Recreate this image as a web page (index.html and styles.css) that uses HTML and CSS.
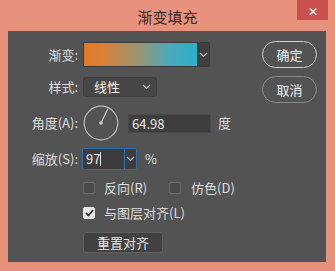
FILE: index.html
```html
<!DOCTYPE html>
<html lang="zh-CN">
<head>
    <meta charset="UTF-8">
    <title>渐变填充</title>
    <link rel="stylesheet" href="styles.css">
</head>
<body>

<div class="window">
    <div class="titlebar">
        <span class="title">渐变填充</span>
        <span class="close">✕</span>
    </div>

    <div class="panel">
        <div class="form">
            <div class="row row-gradient">
                <span class="label">渐变:</span>
                <div class="gradient-box">
                    <div class="gradient"></div>
                    <div class="drop"><svg width="9" height="6" viewBox="0 0 9 6"><path d="M1 1l3.5 3.5L8 1" fill="none" stroke="#bbb" stroke-width="1.2"/></svg></div>
                </div>
            </div>

            <div class="row row-style">
                <span class="label">样式:</span>
                <div class="select">
                    <span>线性</span>
                    <svg width="9" height="6" viewBox="0 0 9 6"><path d="M1 1l3.5 3.5L8 1" fill="none" stroke="#ccc" stroke-width="1.2"/></svg>
                </div>
            </div>

            <div class="row row-angle">
                <span class="label">角度(A):</span>
                <svg class="dial" width="36" height="36" viewBox="0 0 36 36">
                    <circle cx="18" cy="18" r="16.8" fill="none" stroke="#bdbdbd" stroke-width="1.2"/>
                    <line x1="18" y1="18" x2="25" y2="3.5" stroke="#cfcfcf" stroke-width="1.2"/>
                    <circle cx="18" cy="18" r="1.8" fill="#cfcfcf"/>
                </svg>
                <div class="input angle-input">64.98</div>
                <span class="unit">度</span>
            </div>

            <div class="row row-scale">
                <span class="label">缩放(S):</span>
                <div class="scale-box">
                    <div class="scale-value">97<span class="caret"></span></div>
                    <div class="scale-drop"><svg width="9" height="6" viewBox="0 0 9 6"><path d="M1 1l3.5 3.5L8 1" fill="none" stroke="#bbb" stroke-width="1.2"/></svg></div>
                </div>
                <span class="unit">%</span>
            </div>

            <div class="row row-checks">
                <label class="check"><span class="box"></span>反向(R)</label>
                <label class="check check-second"><span class="box"></span>仿色(D)</label>
            </div>

            <div class="row row-align">
                <label class="check"><span class="box checked"><svg width="9" height="8" viewBox="0 0 9 8"><path d="M1 4l2.5 2.5L8 1" fill="none" stroke="#333" stroke-width="1.8"/></svg></span>与图层对齐(L)</label>
            </div>

            <div class="row row-reset">
                <button class="btn-reset">重置对齐</button>
            </div>
        </div>

        <div class="actions">
            <button class="btn-pill btn-ok">确定</button>
            <button class="btn-pill btn-cancel">取消</button>
        </div>
    </div>
</div>

</body>
</html>
```

FILE: styles.css
```css
body {
    margin: 0;
    font-family: "Noto Sans CJK SC", "Liberation Sans", sans-serif;
    background-color: #e8927d;
}
.window {
    width: 335px;
    height: 271px;
    background-color: #e8927d;
    overflow: hidden;
}
.titlebar {
    height: 31px;
    display: flex;
    justify-content: center;
    align-items: center;
    position: relative;
}
.title {
    font-size: 15px;
    color: #3b2620;
    margin-top: 1px;
}
.close {
    position: absolute;
    top: 0;
    right: 7px;
    width: 31px;
    height: 20px;
    background-color: #c9504d;
    color: #fff;
    font-size: 12px;
    display: flex;
    justify-content: center;
    align-items: center;
}
.panel {
    margin: 0 9px 0 8px;
    height: 231px;
    background-color: #535353;
    display: flex;
    color: #dedede;
    font-size: 13px;
    line-height: 16px;
}
.form {
    flex: 1;
    padding-top: 11px;
}
.row {
    display: flex;
    align-items: center;
}
.label {
    width: 70px;
    text-align: right;
    margin-right: 5px;
    white-space: nowrap;
}
.gradient-box {
    display: flex;
    height: 25px;
    width: 127px;
    background-color: #3f3f3f;
    border: 1px solid #3a3a3a;
    box-sizing: border-box;
    border-radius: 2px;
}
.gradient {
    width: 113px;
    background: linear-gradient(to right, #e27a26 0%, #dd8034 15%, #9a9572 48%, #4aa9bc 76%, #2bb0cb 100%);
}
.drop {
    flex: 1;
    display: flex;
    justify-content: center;
    align-items: center;
}
.row-style {
    margin-top: 10px;
}
.select {
    width: 74px;
    height: 20px;
    box-sizing: border-box;
    background-color: #464646;
    border: 1px solid #3d3d3d;
    border-radius: 3px;
    display: flex;
    align-items: center;
    justify-content: space-between;
    padding: 0 5px 0 10px;
    color: #f0f0f0;
}
.row-angle {
    margin-top: 8px;
}
.input {
    height: 19px;
    box-sizing: border-box;
    background-color: #3e3e3e;
    border: 1px solid #4a4a4a;
    display: flex;
    align-items: center;
    padding-left: 3px;
    color: #e8e8e8;
}
.angle-input {
    width: 83px;
    margin-left: 9px;
    padding-top: 1px;
}
.unit {
    margin-left: 7px;
}
.row-scale {
    margin-top: 7px;
}
.scale-box {
    display: flex;
    width: 55px;
    height: 22px;
    box-sizing: border-box;
    border: 1px solid #2d6fb0;
    border-radius: 2px;
    background-color: #3c3c3c;
    margin-left: -1px;
}
.scale-value {
    width: 38px;
    border-right: 1px solid #2d6fb0;
    display: flex;
    align-items: center;
    padding-left: 3px;
    color: #ececec;
}
.caret {
    width: 1px;
    height: 14px;
    background-color: #eee;
}
.scale-drop {
    flex: 1;
    display: flex;
    justify-content: center;
    align-items: center;
}
.row-scale .unit {
    margin-left: 8px;
}
.row-checks {
    margin-top: 11px;
    height: 13px;
    padding-left: 75px;
}
.check {
    display: flex;
    align-items: center;
    white-space: nowrap;
}
.box {
    width: 12px;
    height: 12px;
    box-sizing: border-box;
    border: 1px solid #6a6a6a;
    border-radius: 2px;
    background-color: #4a4a4a;
    margin-right: 9px;
    display: flex;
    justify-content: center;
    align-items: center;
}
.box.checked {
    background-color: #e6e6e6;
    border-color: #e6e6e6;
}
.check-second {
    margin-left: 22px;
}
.check-second .box {
    margin-right: 10px;
}
.row-align {
    margin-top: 12px;
    height: 14px;
    padding-left: 75px;
}
.row-reset {
    margin-top: 12px;
    padding-left: 75px;
}
.btn-reset {
    width: 80px;
    height: 21px;
    background-color: #414141;
    border: 1px solid #5f5f5f;
    border-radius: 3px;
    color: #e6e6e6;
    font-family: inherit;
    font-size: 13px;
    line-height: 16px;
    padding: 0;
}
.actions {
    width: 55px;
    margin-right: 9px;
    padding-top: 10px;
    display: flex;
    flex-direction: column;
}
.btn-pill {
    height: 27px;
    border-radius: 14px;
    background-color: #535353;
    color: #f2f2f2;
    font-family: inherit;
    font-size: 13px;
    padding: 0;
}
.btn-ok {
    border: 1.5px solid #d0d0d0;
}
.btn-cancel {
    margin-top: 8px;
    border: 1px solid #8a8a8a;
}
```
